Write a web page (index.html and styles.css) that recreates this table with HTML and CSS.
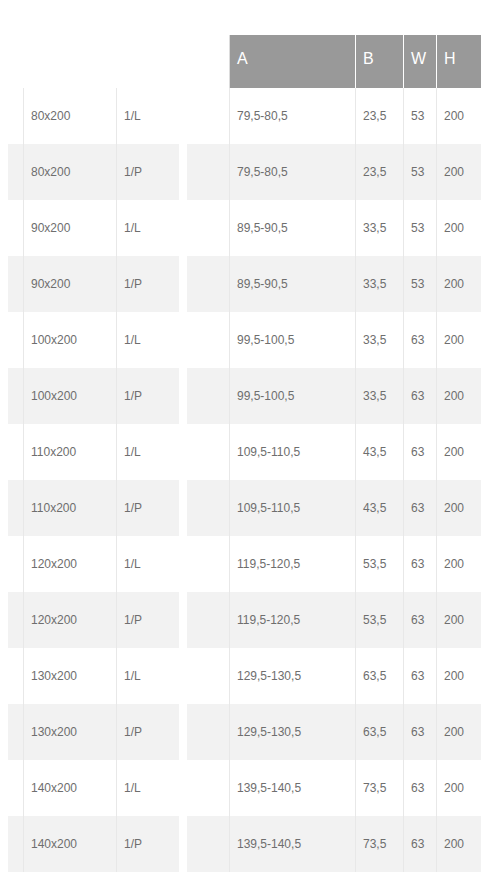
FILE: index.html
```html
<!DOCTYPE html>
<html>
<head>
<meta charset="utf-8">
<link rel="stylesheet" href="styles.css">
</head>
<body>
<div class="table">
  <div class="row head">
    <div class="c c0"></div><div class="c c1"></div><div class="c c2"></div><div class="c gap"></div><div class="c c3"></div>
    <div class="c c4">A</div><div class="c c5">B</div><div class="c c6">W</div><div class="c c7">H</div>
  </div>
  <div class="row"><div class="c c0"></div><div class="c c1">80x200</div><div class="c c2">1/L</div><div class="c gap"></div><div class="c c3"></div><div class="c c4">79,5-80,5</div><div class="c c5">23,5</div><div class="c c6">53</div><div class="c c7">200</div></div>
  <div class="row alt"><div class="c c0"></div><div class="c c1">80x200</div><div class="c c2">1/P</div><div class="c gap"></div><div class="c c3"></div><div class="c c4">79,5-80,5</div><div class="c c5">23,5</div><div class="c c6">53</div><div class="c c7">200</div></div>
  <div class="row"><div class="c c0"></div><div class="c c1">90x200</div><div class="c c2">1/L</div><div class="c gap"></div><div class="c c3"></div><div class="c c4">89,5-90,5</div><div class="c c5">33,5</div><div class="c c6">53</div><div class="c c7">200</div></div>
  <div class="row alt"><div class="c c0"></div><div class="c c1">90x200</div><div class="c c2">1/P</div><div class="c gap"></div><div class="c c3"></div><div class="c c4">89,5-90,5</div><div class="c c5">33,5</div><div class="c c6">53</div><div class="c c7">200</div></div>
  <div class="row"><div class="c c0"></div><div class="c c1">100x200</div><div class="c c2">1/L</div><div class="c gap"></div><div class="c c3"></div><div class="c c4">99,5-100,5</div><div class="c c5">33,5</div><div class="c c6">63</div><div class="c c7">200</div></div>
  <div class="row alt"><div class="c c0"></div><div class="c c1">100x200</div><div class="c c2">1/P</div><div class="c gap"></div><div class="c c3"></div><div class="c c4">99,5-100,5</div><div class="c c5">33,5</div><div class="c c6">63</div><div class="c c7">200</div></div>
  <div class="row"><div class="c c0"></div><div class="c c1">110x200</div><div class="c c2">1/L</div><div class="c gap"></div><div class="c c3"></div><div class="c c4">109,5-110,5</div><div class="c c5">43,5</div><div class="c c6">63</div><div class="c c7">200</div></div>
  <div class="row alt"><div class="c c0"></div><div class="c c1">110x200</div><div class="c c2">1/P</div><div class="c gap"></div><div class="c c3"></div><div class="c c4">109,5-110,5</div><div class="c c5">43,5</div><div class="c c6">63</div><div class="c c7">200</div></div>
  <div class="row"><div class="c c0"></div><div class="c c1">120x200</div><div class="c c2">1/L</div><div class="c gap"></div><div class="c c3"></div><div class="c c4">119,5-120,5</div><div class="c c5">53,5</div><div class="c c6">63</div><div class="c c7">200</div></div>
  <div class="row alt"><div class="c c0"></div><div class="c c1">120x200</div><div class="c c2">1/P</div><div class="c gap"></div><div class="c c3"></div><div class="c c4">119,5-120,5</div><div class="c c5">53,5</div><div class="c c6">63</div><div class="c c7">200</div></div>
  <div class="row"><div class="c c0"></div><div class="c c1">130x200</div><div class="c c2">1/L</div><div class="c gap"></div><div class="c c3"></div><div class="c c4">129,5-130,5</div><div class="c c5">63,5</div><div class="c c6">63</div><div class="c c7">200</div></div>
  <div class="row alt"><div class="c c0"></div><div class="c c1">130x200</div><div class="c c2">1/P</div><div class="c gap"></div><div class="c c3"></div><div class="c c4">129,5-130,5</div><div class="c c5">63,5</div><div class="c c6">63</div><div class="c c7">200</div></div>
  <div class="row"><div class="c c0"></div><div class="c c1">140x200</div><div class="c c2">1/L</div><div class="c gap"></div><div class="c c3"></div><div class="c c4">139,5-140,5</div><div class="c c5">73,5</div><div class="c c6">63</div><div class="c c7">200</div></div>
  <div class="row alt"><div class="c c0"></div><div class="c c1">140x200</div><div class="c c2">1/P</div><div class="c gap"></div><div class="c c3"></div><div class="c c4">139,5-140,5</div><div class="c c5">73,5</div><div class="c c6">63</div><div class="c c7">200</div></div>
</div>
</body>
</html>
```
FILE: styles.css
```css
html, body {
  margin: 0;
  padding: 0;
  background: #fff;
}
body {
  font-family: "Liberation Sans", Arial, sans-serif;
  overflow: hidden;
}
.table {
  padding: 35px 0 0 8px;
}
.row {
  display: grid;
  grid-template-columns: 15px 93px 63px 8px 42px 126px 48px 33px 1fr;
  height: 56px;
  font-size: 12px;
  color: #6e6e6e;
}
.c {
  display: flex;
  align-items: center;
  box-sizing: border-box;
  padding-left: 7px;
  white-space: nowrap;
}
.c1, .c2, .c4, .c5, .c6, .c7 {
  border-left: 1px solid #e8e8e8;
}
.alt .c { background: #f2f2f2; }
.alt .gap { background: #fff; }
.head {
  height: 53px;
  font-size: 16px;
  color: #fff;
}
.head .c1, .head .c2 { border-left-color: transparent; }
.head .c4, .head .c5, .head .c6, .head .c7 {
  background: #999;
  padding-bottom: 5px;
}
.head .c4 { border-left-color: #dcdcdc; }
.head .c5, .head .c6, .head .c7 { border-left-color: #fff; }
```
